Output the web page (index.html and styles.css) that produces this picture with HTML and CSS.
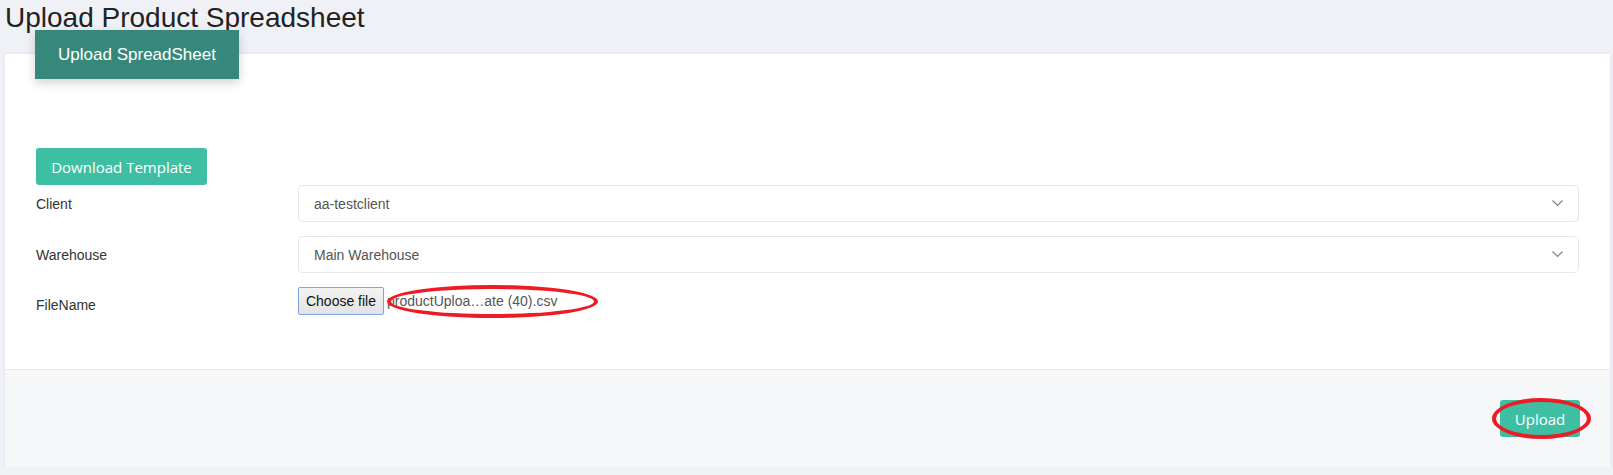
FILE: index.html
```html
<!DOCTYPE html>
<html lang="en">
<head>
    <meta charset="UTF-8">
    <meta name="viewport" content="width=device-width, initial-scale=1.0">
    <title>Upload Product Spreadsheet</title>
    <link rel="stylesheet" href="styles.css">
</head>
<body>
    <h1 class="page-title">Upload Product Spreadsheet</h1>

    <div class="card">
        <div class="card-tab">Upload SpreadSheet</div>

        <div class="card-body">
            <button class="btn btn-green btn-template">Download Template</button>

            <div class="form-row">
                <label class="form-label">Client</label>
                <div class="select">
                    <span>aa-testclient</span>
                    <svg class="chevron" width="11" height="7" viewBox="0 0 11 7"><path d="M0.5 0.5 L5.5 5.5 L10.5 0.5" fill="none" stroke="#7a7a88" stroke-width="1.1"/></svg>
                </div>
            </div>

            <div class="form-row">
                <label class="form-label">Warehouse</label>
                <div class="select">
                    <span>Main Warehouse</span>
                    <svg class="chevron" width="11" height="7" viewBox="0 0 11 7"><path d="M0.5 0.5 L5.5 5.5 L10.5 0.5" fill="none" stroke="#7a7a88" stroke-width="1.1"/></svg>
                </div>
            </div>

            <div class="form-row file-row">
                <label class="form-label">FileName</label>
                <div class="file-input">
                    <button class="choose-btn">Choose file</button>
                    <span class="file-name">productUploa…ate (40).csv</span>
                    <span class="mark mark-file"></span>
                </div>
            </div>
        </div>

        <div class="card-footer">
            <div class="upload-wrap">
                <button class="btn btn-green btn-upload">Upload</button>
                <span class="mark mark-upload"></span>
            </div>
        </div>
    </div>
</body>
</html>
```

FILE: styles.css
```css
body {
    margin: 0;
    padding: 0;
    background-color: #f0f1f6;
    font-family: "Liberation Sans", Arial, sans-serif;
    color: #333;
}
.page-title {
    margin: 0;
    padding: 0 0 0 5px;
    font-size: 28px;
    font-weight: normal;
    line-height: 36px;
    height: 54px;
    color: #222;
}
.card {
    display: flow-root;
    margin: 0 3px 0 5px;
    background-color: #fff;
    box-shadow: 0 0 5px rgba(40, 40, 90, 0.06);
}
.card-tab {
    position: relative;
    width: 204px;
    height: 49px;
    margin: -24px 0 0 30px;
    background-color: #36897a;
    color: #fff;
    font-size: 17px;
    line-height: 49px;
    text-align: center;
    box-shadow: 0 4px 10px rgba(0, 0, 0, 0.18);
}
.card-body {
    padding: 69px 31px 54px 31px;
}
.btn {
    border: none;
    border-radius: 3px;
    color: #fff;
    font-family: "Open Sans", sans-serif;
    font-size: 15px;
    font-weight: 500;
    cursor: pointer;
}
.btn-green {
    background-color: #3ebfa4;
}
.btn-template {
    display: block;
    width: 171px;
    height: 37px;
    padding: 0;
}
.form-row {
    display: flex;
    align-items: center;
    margin-bottom: 14px;
}
.form-label {
    width: 262px;
    flex-shrink: 0;
    font-size: 14px;
    color: #333;
}
.select {
    flex: 1;
    display: flex;
    align-items: center;
    justify-content: space-between;
    height: 35px;
    padding: 0 15px;
    border: 1px solid #e7e8ee;
    border-radius: 4px;
    font-size: 14px;
    color: #555;
}
.file-row {
    margin-bottom: 0;
}
.file-row .form-label {
    padding-top: 8px;
}
.file-input {
    position: relative;
    display: flex;
    align-items: center;
}
.choose-btn {
    width: 86px;
    height: 28px;
    padding: 0;
    border: 1px solid #7ea6de;
    border-radius: 2px;
    background: linear-gradient(#f3f3f3, #e3e3e3);
    font-family: "Liberation Sans", Arial, sans-serif;
    font-size: 14px;
    color: #111;
}
.file-name {
    margin-left: 3px;
    font-size: 14px;
    color: #555;
}
.mark {
    position: absolute;
    border: 4px solid #ed1c24;
    border-radius: 50%;
    box-sizing: border-box;
}
.mark-file {
    left: 89px;
    top: -2px;
    width: 211px;
    height: 33px;
}
.card-footer {
    display: flex;
    justify-content: flex-end;
    height: 98px;
    padding: 30px 30px 0 0;
    box-sizing: border-box;
    background-color: #f6f7f9;
    border-top: 1px solid #e6e8ee;
}
.upload-wrap {
    position: relative;
}
.btn-upload {
    width: 80px;
    height: 37px;
    padding: 0;
}
.mark-upload {
    left: -8px;
    top: -2px;
    width: 99px;
    height: 41px;
}
```
